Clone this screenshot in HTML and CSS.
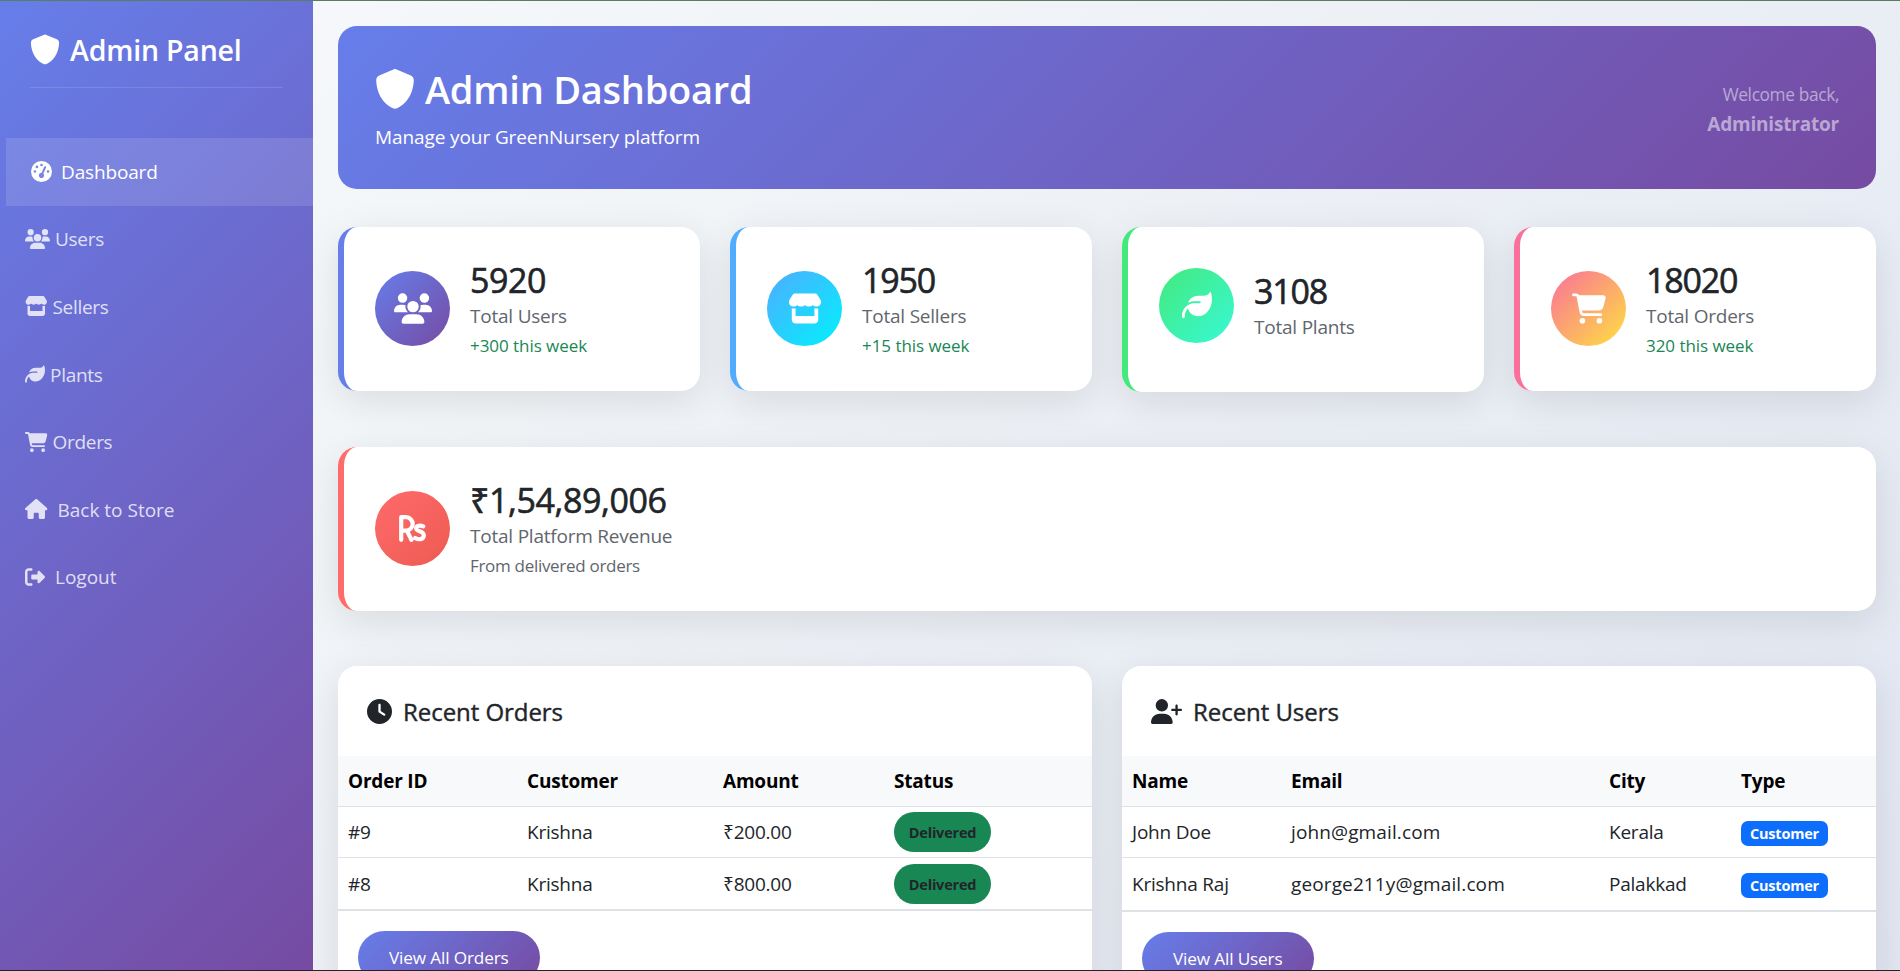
FILE: index.html
```html
<!DOCTYPE html>
<html lang="en">
<head>
<meta charset="utf-8">
<title>Admin Dashboard</title>
<link rel="stylesheet" href="styles.css">
</head>
<body>
<svg class="sprite" aria-hidden="true">
  <symbol id="shield" viewBox="0 0 512 512"><path d="M256 0c4.6 0 9.2 1 13.4 2.9L457.7 82.8c22 9.3 38.4 31 38.3 57.2c-.5 99.2-41.3 280.7-213.6 363.2c-16.7 8-36.1 8-52.8 0C57.3 420.7 16.5 239.2 16 140c-.1-26.2 16.3-47.9 38.3-57.2L242.7 2.9C246.8 1 251.4 0 256 0z"/></symbol>
  <symbol id="gauge" viewBox="0 0 512 512"><path fill-rule="evenodd" d="M0 256a256 256 0 1 1 512 0A256 256 0 1 1 0 256zM288 96a32 32 0 1 0 -64 0 32 32 0 1 0 64 0zM256 416c35.3 0 64-28.7 64-64c0-17.4-6.9-33.1-18.1-44.6L366 161.7c5.3-12.1-.2-26.3-12.3-31.6s-26.3 .2-31.6 12.3L257.9 288c-.6 0-1.3 0-1.9 0c-35.3 0-64 28.7-64 64s28.7 64 64 64zM176 144a32 32 0 1 0 -64 0 32 32 0 1 0 64 0zM96 288a32 32 0 1 0 0-64 32 32 0 1 0 0 64zm352-32a32 32 0 1 0 -64 0 32 32 0 1 0 64 0z"/></symbol>
  <symbol id="users" viewBox="0 0 640 512"><path d="M144 0a80 80 0 1 1 0 160A80 80 0 1 1 144 0zM512 0a80 80 0 1 1 0 160A80 80 0 1 1 512 0zM0 298.7C0 239.8 47.8 192 106.7 192h42.7c15.9 0 31 3.5 44.6 9.7c-1.3 7.2-1.9 14.7-1.9 22.3c0 38.2 16.8 72.5 43.3 96c-.2 0-.4 0-.7 0H21.3C9.6 320 0 310.4 0 298.7zM405.3 320c-.2 0-.4 0-.7 0c26.6-23.5 43.3-57.8 43.3-96c0-7.6-.7-15-1.9-22.3c13.6-6.3 28.7-9.7 44.6-9.7h42.7C592.2 192 640 239.8 640 298.7c0 11.8-9.6 21.3-21.3 21.3H405.3zM224 224a96 96 0 1 1 192 0 96 96 0 1 1 -192 0zM128 485.3C128 411.7 187.7 352 261.3 352H378.7C452.3 352 512 411.7 512 485.3c0 14.7-11.9 26.7-26.7 26.7H154.7c-14.7 0-26.7-11.9-26.7-26.7z"/></symbol>
  <symbol id="store" viewBox="0 0 576 512"><path d="M547.6 103.8L490.3 13.1C485.2 5 476.1 0 466.4 0H109.6C99.9 0 90.8 5 85.7 13.1L28.3 103.8c-29.6 46.8-3.4 111.9 51.9 119.4c4 .5 8.1 .8 12.1 .8c26.1 0 49.3-11.4 65.2-29c15.9 17.6 39.1 29 65.2 29c26.1 0 49.3-11.4 65.2-29c15.9 17.6 39.1 29 65.2 29c26.2 0 49.3-11.4 65.2-29c16 17.6 39.1 29 65.2 29c4.1 0 8.1-.3 12.1-.8c55.5-7.4 81.8-72.5 52.1-119.4zM499.7 254.9l-.1 0c-5.3 .7-10.7 1.1-16.2 1.1c-12.4 0-24.3-1.9-35.4-5.3V384H128V250.6c-11.2 3.5-23.2 5.4-35.6 5.4c-5.5 0-11-.4-16.3-1.1l-.1 0c-4.1-.6-8.1-1.3-12-2.3V384v64c0 35.3 28.7 64 64 64H448c35.3 0 64-28.7 64-64V384 252.6c-4 1-8 1.8-12.3 2.3z"/></symbol>
  <symbol id="leaf" viewBox="0 0 512 512"><path d="M272 96c-78.6 0-145.1 51.5-167.7 122.5c33.6-17 71.5-26.5 111.7-26.5h88c8.8 0 16 7.2 16 16s-7.2 16-16 16H288 216c-16.6 0-32.7 1.9-48.2 5.4c-25.9 5.9-50 16.4-71.4 30.7C38.3 298.8 0 364.9 0 440v16c0 13.3 10.7 24 24 24s24-10.7 24-24V440c0-48.7 20.7-92.5 53.8-123.2C121.6 392.3 190.3 448 272 448l1 0c132.1-.7 239-130.9 239-291.4c0-42.6-7.5-83.1-21.1-119.6c-2.6-6.9-12.7-6.6-16.2-.1C455.9 72.1 418.7 96 376 96L272 96z"/></symbol>
  <symbol id="cart" viewBox="0 0 576 512"><path d="M0 24C0 10.7 10.7 0 24 0H69.5c22 0 41.5 12.8 50.6 32h411c26.3 0 45.5 25 38.6 50.4l-41 152.3c-8.5 31.4-37 53.3-69.5 53.3H170.7l5.4 28.5c2.2 11.3 12.1 19.5 23.6 19.5H488c13.3 0 24 10.7 24 24s-10.7 24-24 24H199.7c-34.6 0-64.3-24.6-70.7-58.5L77.4 54.5c-.7-3.8-4-6.5-7.9-6.5H24C10.7 48 0 37.3 0 24zM128 464a48 48 0 1 1 96 0 48 48 0 1 1 -96 0zm336-48a48 48 0 1 1 0 96 48 48 0 1 1 0-96z"/></symbol>
  <symbol id="home" viewBox="0 0 576 512"><path d="M575.8 255.5c0 18-15 32.1-32 32.1h-32l.7 160.2c0 2.7-.2 5.4-.5 8.1V472c0 22.1-17.9 40-40 40H456c-1.1 0-2.2 0-3.3-.1c-1.4 .1-2.8 .1-4.2 .1H416 392c-22.1 0-40-17.9-40-40V448 384c0-17.7-14.3-32-32-32H256c-17.7 0-32 14.3-32 32v64 24c0 22.1-17.9 40-40 40H160 128.1c-1.5 0-3-.1-4.5-.2c-1.2 .1-2.4 .2-3.6 .2H104c-22.1 0-40-17.9-40-40V360c0-.9 0-1.9 .1-2.8V287.6H32c-18 0-32-14-32-32.1c0-9 3-17 10-24L266.4 8c7-7 15-8 22-8s15 2 21 7L564.8 231.5c8 7 12 15 11 24z"/></symbol>
  <symbol id="logout" viewBox="0 0 512 512"><path d="M377.9 105.9L500.7 228.7c7.2 7.2 11.3 17.1 11.3 27.3s-4.1 20.1-11.3 27.3L377.9 406.1c-6.4 6.4-15 9.9-24 9.9c-18.7 0-33.9-15.2-33.9-33.9l0-62.1-128 0c-17.7 0-32-14.3-32-32l0-64c0-17.7 14.3-32 32-32l128 0 0-62.1c0-18.7 15.2-33.9 33.9-33.9c9 0 17.6 3.6 24 9.9zM160 96L96 96c-17.7 0-32 14.3-32 32l0 256c0 17.7 14.3 32 32 32l64 0c17.7 0 32 14.3 32 32s-14.3 32-32 32l-64 0c-53 0-96-43-96-96L0 128C0 75 43 32 96 32l64 0c17.7 0 32 14.3 32 32s-14.3 32-32 32z"/></symbol>
  <symbol id="clock" viewBox="0 0 512 512"><path fill-rule="evenodd" d="M256 0a256 256 0 1 1 0 512A256 256 0 1 1 256 0zM232 120V256c0 8 4 15.5 10.7 20l96 64c11 7.4 25.9 4.4 33.3-6.7s4.4-25.9-6.7-33.3L280 243.2V120c0-13.3-10.7-24-24-24s-24 10.7-24 24z"/></symbol>
  <symbol id="user-plus" viewBox="0 0 640 512"><path d="M96 128a128 128 0 1 1 256 0A128 128 0 1 1 96 128zM0 482.3C0 383.8 79.8 304 178.3 304h91.4C368.2 304 448 383.8 448 482.3c0 16.4-13.3 29.7-29.7 29.7H29.7C13.3 512 0 498.7 0 482.3zM504 312V248H440c-13.3 0-24-10.7-24-24s10.7-24 24-24h64V136c0-13.3 10.7-24 24-24s24 10.7 24 24v64h64c13.3 0 24 10.7 24 24s-10.7 24-24 24H552v64c0 13.3-10.7 24-24 24s-24-10.7-24-24z"/></symbol>
  <symbol id="rupee" viewBox="0 0 27 27"><path fill="none" stroke="currentColor" stroke-width="4.2" stroke-linecap="round" stroke-linejoin="round" d="M2.200 24.800V2.200h4.800a6.700 6.700 0 0 1 0 13.400H2.200M8 16l4.400 8.800M24.200 11.400c-2.400-1.200-7.200-1.200-7 2.200.3 3.400 7.600 2 7.600 6.600 0 4.700-5.600 4.800-8.600 2.800"/></symbol>
</svg>
<div class="screen">
  <aside class="sidebar">
    <div class="brand"><svg class="brand-icon"><use href="#shield"/></svg><span>Admin Panel</span></div>
    <nav class="nav">
      <a class="nav-item active"><svg class="i-21"><use href="#gauge"/></svg><span>Dashboard</span></a>
      <a class="nav-item tight"><svg class="i-25"><use href="#users"/></svg><span>Users</span></a>
      <a class="nav-item tight"><svg class="i-22"><use href="#store"/></svg><span>Sellers</span></a>
      <a class="nav-item tight"><svg class="i-20"><use href="#leaf"/></svg><span>Plants</span></a>
      <a class="nav-item tight"><svg class="i-22"><use href="#cart"/></svg><span>Orders</span></a>
      <a class="nav-item wide"><svg class="i-22"><use href="#home"/></svg><span>Back to Store</span></a>
      <a class="nav-item wide"><svg class="i-20"><use href="#logout"/></svg><span>Logout</span></a>
    </nav>
  </aside>
  <main class="main">
    <header class="banner">
      <div>
        <h1 class="title"><svg class="title-icon"><use href="#shield"/></svg><span>Admin Dashboard</span></h1>
        <p class="subtitle">Manage your GreenNursery platform</p>
      </div>
      <div class="welcome"><div class="hello">Welcome back,</div><div class="who">Administrator</div></div>
    </header>
    <section class="stats">
      <article class="card users"><div class="badge-icon"><svg class="i-38"><use href="#users"/></svg></div><div class="info"><div class="num">5920</div><div class="label">Total Users</div><div class="note">+300 this week</div></div></article>
      <article class="card sellers"><div class="badge-icon"><svg class="i-34"><use href="#store"/></svg></div><div class="info"><div class="num snug">1950</div><div class="label">Total Sellers</div><div class="note">+15 this week</div></div></article>
      <article class="card plants"><div class="badge-icon"><svg class="i-30"><use href="#leaf"/></svg></div><div class="info"><div class="num snug">3108</div><div class="label">Total Plants</div></div></article>
      <article class="card orders"><div class="badge-icon"><svg class="i-34"><use href="#cart"/></svg></div><div class="info"><div class="num snug">18020</div><div class="label">Total Orders</div><div class="note">320 this week</div></div></article>
    </section>
    <article class="card revenue"><div class="badge-icon"><svg class="i-rs"><use href="#rupee"/></svg></div><div class="info"><div class="num">₹1,54,89,006</div><div class="label">Total Platform Revenue</div><div class="note muted">From delivered orders</div></div></article>
    <section class="panels">
      <div class="panel">
        <h2 class="panel-title"><svg class="i-25c"><use href="#clock"/></svg><span>Recent Orders</span></h2>
        <table class="table">
          <colgroup><col class="o1"><col class="o2"><col class="o3"><col></colgroup>
          <thead><tr><th>Order ID</th><th>Customer</th><th>Amount</th><th>Status</th></tr></thead>
          <tbody>
            <tr><td>#9</td><td>Krishna</td><td>₹200.00</td><td><span class="pill">Delivered</span></td></tr>
            <tr><td>#8</td><td>Krishna</td><td>₹800.00</td><td><span class="pill">Delivered</span></td></tr>
          </tbody>
        </table>
        <a class="btn">View All Orders</a>
      </div>
      <div class="panel right">
        <h2 class="panel-title"><svg class="i-31"><use href="#user-plus"/></svg><span>Recent Users</span></h2>
        <table class="table">
          <colgroup><col class="u1"><col class="u2"><col class="u3"><col></colgroup>
          <thead><tr><th>Name</th><th>Email</th><th>City</th><th>Type</th></tr></thead>
          <tbody>
            <tr><td>John Doe</td><td class="email">john@gmail.com</td><td>Kerala</td><td><span class="tag">Customer</span></td></tr>
            <tr><td>Krishna Raj</td><td class="email">george211y@gmail.com</td><td>Palakkad</td><td><span class="tag">Customer</span></td></tr>
          </tbody>
        </table>
        <a class="btn">View All Users</a>
      </div>
    </section>
  </main>
</div>
</body>
</html>
```
FILE: styles.css
```css
* { box-sizing: border-box; }
body { margin: 0; font-family: "Open Sans", "Noto Sans", sans-serif; font-size: 19px; color: #212529; letter-spacing: -0.15px; }
svg { fill: currentColor; flex: none; display: block; }
.sprite { display: none; }
.screen { display: grid; grid-template-columns: 313px 1fr; height: 971px; overflow: hidden; border-top: 1px solid #5a7d5f; border-bottom: 1px solid #20242a; background: linear-gradient(135deg, #f8f9fd 0%, #f1f5f8 30%, #e2e6f1 100%); }

.sidebar { background: linear-gradient(135deg, #667eea 0%, #764ba2 100%); color: #fff; }
.brand { display: flex; align-items: center; gap: 10px; margin: 24px 30px 0; height: 63px; padding-bottom: 13px; border-bottom: 1px solid rgba(255,255,255,.13); font-size: 28.5px; font-weight: 600; letter-spacing: -0.2px; line-height: 48px; }
.brand span { padding-top: 1px; }
.brand-icon { width: 30px; height: 31px; }
.nav { display: flex; flex-direction: column; margin-top: 50px; }
.nav-item { display: flex; align-items: center; gap: 10px; height: 67.6px; padding-left: 25px; color: rgba(255,255,255,.8); }
.nav-item svg { margin-top: -1px; }
.nav-item.tight { gap: 5px; letter-spacing: -0.3px; }
.nav-item.wide { letter-spacing: 0; }
.nav-item.active { gap: 9px; margin-left: 6px; color: #fff; background: rgba(255,255,255,.12); }
.i-20 { width: 20px; height: 20px; }
.i-21 { width: 21px; height: 21px; }
.i-22 { width: 22.5px; height: 20px; }
.i-25 { width: 25px; height: 20px; }

.main { padding: 25px 24px 0 25px; height: 969px; overflow: hidden; }
.banner { display: flex; justify-content: space-between; height: 163px; padding: 36px 37px 0; border-radius: 19px; background: linear-gradient(135deg, #667eea 0%, #764ba2 100%); color: #fff; }
.title { display: flex; align-items: center; gap: 10px; margin: 0; height: 54px; font-size: 38px; font-weight: 600; letter-spacing: -0.25px; }
.title-icon { width: 40px; height: 40px; }
.subtitle { margin: 6px 0 0; line-height: 30px; letter-spacing: -0.1px; }
.welcome { margin-top: 18px; text-align: right; color: rgba(255,255,255,.5); }
.hello { font-size: 17.3px; line-height: 30px; letter-spacing: -0.35px; }
.who { font-size: 19px; line-height: 29px; font-weight: 700; letter-spacing: -0.2px; }

.stats { display: grid; grid-template-columns: repeat(4, 1fr); gap: 30px; margin-top: 38px; }
.card { display: flex; gap: 20px; height: 164px; padding: 0 31px 1px; align-items: center; background: #fff; border-left: 6px solid; border-radius: 19px; box-shadow: 0 10px 38px rgba(0,0,0,.1); }
.badge-icon { display: flex; align-items: center; justify-content: center; width: 75px; height: 75px; border-radius: 50%; color: #fff; flex: none; }
.info { color: #212529; margin-top: 2px; }
.num { font-size: 34px; -webkit-text-stroke: 0.6px currentColor; line-height: 42px; letter-spacing: -0.4px; }
.num.snug { letter-spacing: -1.2px; }
.label { line-height: 30px; color: #5f666d; letter-spacing: -0.22px; }
.note { font-size: 17px; line-height: 30px; color: #198754; letter-spacing: -0.05px; }
.note.muted { color: #5f666d; letter-spacing: -0.3px; }
.users { border-color: #667eea; }
.users .badge-icon { background: linear-gradient(135deg, #667eea, #764ba2); }
.sellers { border-color: #4facfe; }
.sellers .badge-icon { background: linear-gradient(135deg, #4facfe, #00f2fe); }
.plants { border-color: #43e97b; height: 165px; padding-bottom: 9px; }
.plants .badge-icon { background: linear-gradient(135deg, #43e97b, #38f9d7); }
.orders { border-color: #fa709a; }
.orders .badge-icon { background: linear-gradient(135deg, #fa709a, #fee140); }
.revenue { border-color: #ff6b6b; margin-top: 55px; }
.revenue .badge-icon { background: linear-gradient(135deg, #ff6b6b, #ee5a52); }
.i-38 { width: 38px; height: 31px; }
.i-34 { width: 34px; height: 31px; }
.i-30 { width: 30px; height: 30px; }
.i-rs { width: 27px; height: 27px; }

.panels { display: grid; grid-template-columns: 1fr 1fr; gap: 30px; margin-top: 55px; }
.panel { height: 340px; border-radius: 19px; background: #fff; box-shadow: 0 10px 38px rgba(0,0,0,.1); }
.panel-title { display: flex; align-items: center; gap: 11px; height: 90px; margin: 0; padding: 0 0 0 29px; font-size: 24px; font-weight: 400; -webkit-text-stroke: 0.4px currentColor; letter-spacing: -0.05px; }
.panel-title svg { -webkit-text-stroke: 0; }
.i-25c { width: 25px; height: 25px; }
.i-31 { width: 31px; height: 25px; }
.table { width: 100%; table-layout: fixed; border-collapse: separate; border-spacing: 0; border-bottom: 2px solid #dee2e6; }
.table th, .table td { padding: 0 0 0 10px; height: 51px; text-align: left; border-bottom: 1px solid #dee2e6; line-height: 30px; }
.table th { background: #f8f9fb; color: #000; font-weight: 700; letter-spacing: -0.2px; }
.table td { letter-spacing: -0.22px; }
.table td.email { letter-spacing: 0.12px; }
.table tbody tr:last-child td { border-bottom: 0; }
.right tbody tr:last-child td { height: 52px; padding-bottom: 1px; }
.o1 { width: 179px; } .o2 { width: 196px; } .o3 { width: 171px; }
.u1 { width: 159px; } .u2 { width: 318px; } .u3 { width: 132px; }
.pill, .tag { display: inline-block; font-size: 14.5px; font-weight: 700; letter-spacing: -0.2px; text-align: center; vertical-align: middle; }
.pill { width: 97px; height: 40px; line-height: 41px; border-radius: 20px; background: #198754; color: #212529; }
.tag { width: 87px; height: 25px; line-height: 25px; border-radius: 7px; background: #0d6efd; color: #fff; }
.btn { display: block; width: fit-content; margin: 20px 0 0 20px; padding: 0 31px; height: 53px; line-height: 53px; border-radius: 27px; background: linear-gradient(135deg, #667eea, #764ba2); color: #fff; font-size: 17.2px; letter-spacing: -0.15px; }
```
